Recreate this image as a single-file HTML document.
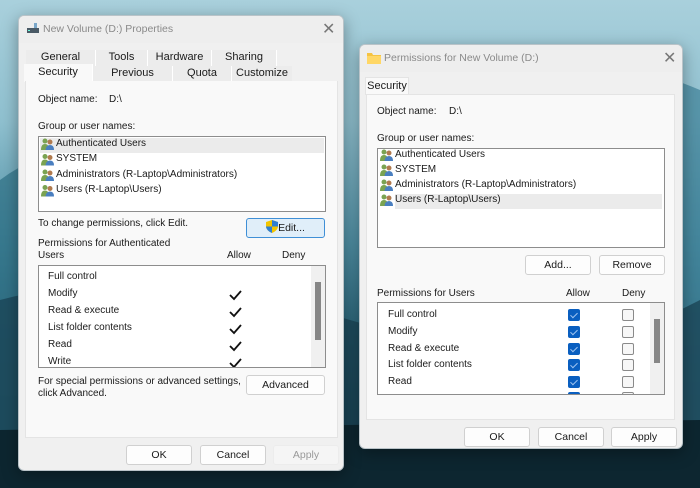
<!DOCTYPE html>
<html><head><meta charset="utf-8"><style>
*{margin:0;padding:0;box-sizing:border-box}
body{width:700px;height:488px;overflow:hidden;position:relative;font-family:"Liberation Sans",sans-serif;font-size:10px;color:#1a1a1a;
background:linear-gradient(180deg,#a9d0dc 0%,#8fc0cf 25%,#4f8fa4 50%,#2a6478 68%,#163d4c 85%,#0f2c38 100%)}
.a{position:absolute;white-space:nowrap}
.win{position:absolute;background:#f0f0f0;border:1px solid #b9c3c8;border-radius:6px;box-shadow:0 4px 16px rgba(0,0,0,.35);overflow:hidden}
.tb{position:absolute;left:0;right:0;top:0;background:#eeeeee;color:#8a8a8a;font-size:10.5px}
.panel{position:absolute;background:#f9f9f9;border:1px solid #e4e4e4}
.box{position:absolute;background:#fff;border:1px solid #8d8d8d}
.btn{position:absolute;background:#fdfdfd;border:1px solid #d0d0d0;border-radius:3px;text-align:center;line-height:18px;font-size:10.5px}
.tab{position:absolute;background:#ececec;border-right:1px solid #fff;text-align:center;line-height:15px;font-size:11px}
.hl{position:absolute;background:#ebebeb}
.ck{position:absolute;width:12px;height:12px;border-radius:2px;background:#0a5fc0}
.ck:after{content:"";position:absolute;left:4px;top:2px;width:3px;height:6px;border:solid #9fc4f0;border-width:0 1px 1px 0;transform:rotate(45deg)}
.cu{position:absolute;width:12px;height:12px;border-radius:2px;border:1px solid #8a8a8a;background:#f7f7f7}
.sb{position:absolute;background:#f0f0f0}
.th{position:absolute;background:#868686}
</style></head><body>
<svg class="a" style="left:0;top:0" width="700" height="488"><path d="M0 180 Q80 120 180 190 L180 488 L0 488Z" fill="#2d6f85" opacity=".7"/><path d="M500 70 Q580 40 700 90 L700 488 L500 488Z" fill="#3f8299" opacity=".7"/><path d="M0 300 Q150 260 350 320 T700 300 L700 488 L0 488Z" fill="#1b4657" opacity=".8"/><path d="M0 430 L700 420 L700 488 L0 488Z" fill="#0d2630"/></svg>

<div class="win" style="left:18px;top:15px;width:326px;height:456px">
 <div class="tb" style="height:27px">
  <svg class="a" style="left:7px;top:6px" width="14" height="13"><rect x="1" y="6" width="12" height="5" fill="#4a5a66"/><rect x="8" y="1" width="3" height="5" fill="#7aa7c9"/><rect x="2" y="8" width="2" height="1" fill="#6fd"/></svg>
  <span class="a" style="left:24px;top:7px">New Volume (D:) Properties</span>
  <span class="a" style="left:303px;top:3px;font-size:16px;color:#777">✕</span>
 </div>
 <div class="tab" style="left:7px;top:34px;width:70px;height:16px">General</div>
 <div class="tab" style="left:77px;top:34px;width:52px;height:16px">Tools</div>
 <div class="tab" style="left:129px;top:34px;width:64px;height:16px">Hardware</div>
 <div class="tab" style="left:193px;top:34px;width:65px;height:16px">Sharing</div>
 <div class="tab" style="left:5px;top:48px;width:69px;height:18px;background:#f9f9f9;line-height:16px">Security</div>
 <div class="tab" style="left:74px;top:50px;width:80px;height:16px">Previous Versions</div>
 <div class="tab" style="left:154px;top:50px;width:59px;height:16px">Quota</div>
 <div class="tab" style="left:213px;top:50px;width:60px;height:16px;border:0">Customize</div>
 <div class="panel" style="left:6px;top:65px;width:313px;height:357px;border-top:0"></div>
 <span class="a" style="left:19px;top:78px">Object name:</span><span class="a" style="left:90px;top:78px">D:\</span>
 <span class="a" style="left:19px;top:105px">Group or user names:</span>
 <div class="box" style="left:19px;top:120px;width:288px;height:76px">
  <div class="hl" style="left:1px;top:1px;width:284px;height:15px"></div>
 </div>
 <span class="a" style="left:19px;top:202px">To change permissions, click Edit.</span>
 <div class="btn" style="left:227px;top:202px;width:79px;height:20px;background:#e0eef9;border-color:#3f8fd6"><span>
  <svg style="vertical-align:-2px" width="12" height="13"><path d="M6 0 L12 2 L12 7 Q11 11 6 13 Q1 11 0 7 L0 2Z" fill="#f2c500"/><path d="M6 0 L12 2 L12 6.5 L6 6.5Z M0 6.5 L6 6.5 L6 13 Q1 11 0 7Z" fill="#2f7fd3"/></svg>Edit...</span></div>
 <span class="a" style="left:19px;top:222px">Permissions for Authenticated</span>
 <span class="a" style="left:19px;top:234px">Users</span>
 <span class="a" style="left:208px;top:234px">Allow</span><span class="a" style="left:263px;top:234px">Deny</span>
 <div class="box" style="left:19px;top:249px;width:288px;height:103px;overflow:hidden">
  <div class="sb" style="left:272px;top:0;width:14px;height:101px"></div>
  <div class="th" style="left:276px;top:16px;width:6px;height:58px"></div>
  <span class="a" style="left:9px;top:5px">Full control</span>
  <span class="a" style="left:9px;top:22px">Modify</span>
  <span class="a" style="left:9px;top:39px">Read &amp; execute</span>
  <span class="a" style="left:9px;top:56px">List folder contents</span>
  <span class="a" style="left:9px;top:73px">Read</span>
  <span class="a" style="left:9px;top:90px">Write</span>
  <svg class="a" style="left:190px;top:24px" width="14" height="80"><g fill="none" stroke="#111" stroke-width="1.8"><path d="M1 5 L5 9 L12 1"/><path d="M1 22 L5 26 L12 18"/><path d="M1 39 L5 43 L12 35"/><path d="M1 56 L5 60 L12 52"/><path d="M1 73 L5 77 L12 69"/></g></svg>
 </div>
 <span class="a" style="left:19px;top:360px">For special permissions or advanced settings,</span>
 <span class="a" style="left:19px;top:372px">click Advanced.</span>
 <div class="btn" style="left:227px;top:359px;width:79px;height:20px">Advanced</div>
 <div class="btn" style="left:107px;top:429px;width:66px;height:20px">OK</div>
 <div class="btn" style="left:181px;top:429px;width:66px;height:20px">Cancel</div>
 <div class="btn" style="left:254px;top:429px;width:66px;height:20px;background:#f5f5f5;border-color:#ececec;color:#9a9a9a">Apply</div>
</div>

<div class="win" style="left:359px;top:44px;width:324px;height:405px">
 <div class="tb" style="height:27px">
  <svg class="a" style="left:7px;top:7px" width="14" height="12"><path d="M0 1 L5 1 L6 3 L14 3 L14 12 L0 12Z" fill="#f5c342"/><rect x="0" y="4" width="14" height="8" fill="#ffd766"/></svg>
  <span class="a" style="left:24px;top:7px">Permissions for New Volume (D:)</span>
  <span class="a" style="left:303px;top:3px;font-size:16px;color:#777">✕</span>
 </div>
 <div class="tab" style="left:5px;top:32px;width:44px;height:18px;background:#f9f9f9;line-height:17px;border-right:1px solid #e4e4e4;border-left:1px solid #e4e4e4;border-top:1px solid #e4e4e4">Security</div>
 <div class="panel" style="left:6px;top:49px;width:309px;height:326px"></div>
 <span class="a" style="left:17px;top:61px">Object name:</span><span class="a" style="left:89px;top:61px">D:\</span>
 <span class="a" style="left:17px;top:88px">Group or user names:</span>
 <div class="box" style="left:17px;top:103px;width:288px;height:100px">
  <div class="hl" style="left:17px;top:45px;width:267px;height:15px"></div>
 </div>
 <div class="btn" style="left:165px;top:210px;width:66px;height:20px">Add...</div>
 <div class="btn" style="left:239px;top:210px;width:66px;height:20px">Remove</div>
 <span class="a" style="left:17px;top:243px">Permissions for Users</span>
 <span class="a" style="left:206px;top:243px">Allow</span><span class="a" style="left:262px;top:243px">Deny</span>
 <div class="box" style="left:17px;top:257px;width:288px;height:93px;overflow:hidden">
  <div class="sb" style="left:272px;top:0;width:14px;height:91px"></div>
  <div class="th" style="left:276px;top:16px;width:6px;height:44px"></div>
  <span class="a" style="left:10px;top:6px">Full control</span>
  <span class="a" style="left:10px;top:23px">Modify</span>
  <span class="a" style="left:10px;top:40px">Read &amp; execute</span>
  <span class="a" style="left:10px;top:56px">List folder contents</span>
  <span class="a" style="left:10px;top:73px">Read</span>
  <div class="ck" style="left:190px;top:6px"></div><div class="cu" style="left:244px;top:6px"></div>
  <div class="ck" style="left:190px;top:23px"></div><div class="cu" style="left:244px;top:23px"></div>
  <div class="ck" style="left:190px;top:40px"></div><div class="cu" style="left:244px;top:40px"></div>
  <div class="ck" style="left:190px;top:56px"></div><div class="cu" style="left:244px;top:56px"></div>
  <div class="ck" style="left:190px;top:73px"></div><div class="cu" style="left:244px;top:73px"></div>
  <div class="ck" style="left:190px;top:89px"></div><div class="cu" style="left:244px;top:89px"></div>
 </div>
 <div class="btn" style="left:104px;top:382px;width:66px;height:20px">OK</div>
 <div class="btn" style="left:178px;top:382px;width:66px;height:20px">Cancel</div>
 <div class="btn" style="left:251px;top:382px;width:66px;height:20px">Apply</div>
</div>

<svg width="0" height="0" style="position:absolute"><defs><g id="us"><circle cx="4" cy="3" r="2.5" fill="#7aa352"/><path d="M0 12 Q0 6 4 6 Q8 6 8 12Z" fill="#7aa352"/><circle cx="9" cy="4" r="2.5" fill="#b07a4e"/><path d="M4.5 12 Q5 7 9 7 Q13 7 13 12Z" fill="#4a7fc0"/></g></defs></svg>
<svg class="a" style="left:41px;top:138px" width="14" height="60"><use href="#us"/><use href="#us" y="15.5"/><use href="#us" y="31"/><use href="#us" y="46.5"/></svg>
<span class="a" style="left:56px;top:138px">Authenticated Users</span>
<span class="a" style="left:56px;top:153px">SYSTEM</span>
<span class="a" style="left:56px;top:169px">Administrators (R-Laptop\Administrators)</span>
<span class="a" style="left:56px;top:184px">Users (R-Laptop\Users)</span>
<svg class="a" style="left:380px;top:149px" width="14" height="60"><use href="#us"/><use href="#us" y="15"/><use href="#us" y="30"/><use href="#us" y="45"/></svg>
<span class="a" style="left:395px;top:149px">Authenticated Users</span>
<span class="a" style="left:395px;top:164px">SYSTEM</span>
<span class="a" style="left:395px;top:179px">Administrators (R-Laptop\Administrators)</span>
<span class="a" style="left:395px;top:194px">Users (R-Laptop\Users)</span>
</body></html>
